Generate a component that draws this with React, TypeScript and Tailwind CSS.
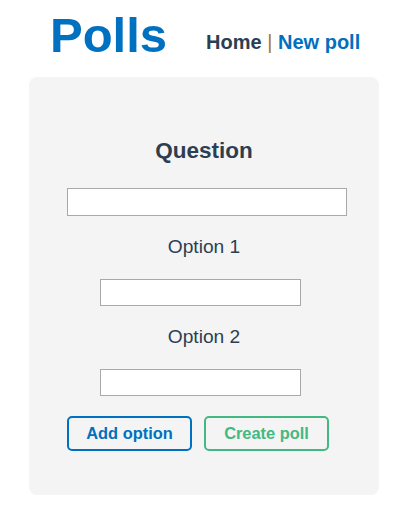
import React from 'react';

const font = { fontFamily: '"Liberation Sans", Arial, sans-serif' };

function Header() {
  return (
    <header className="flex items-start pl-[50px]">
      <h1 className="mt-[11px] text-[49px] leading-[49px] font-bold text-[#0070c0]">Polls</h1>
      <nav className="ml-[39px] mt-[32px] text-[20px] leading-[20px] font-bold">
        <a href="#" className="text-[#2c3e50]">Home</a>
        <span className="font-normal text-[#a8772f]"> | </span>
        <a href="#" className="text-[#0070c0]">New poll</a>
      </nav>
    </header>
  );
}

function OptionField({ label }: { label: string }) {
  return (
    <>
      <label className="mt-[21px] text-[19.2px] leading-[19.2px] text-[#2c3e50]">{label}</label>
      <input
        type="text"
        className="mt-[23px] mr-[7px] h-[27px] w-[201px] border border-[#a9a9a9] bg-white"
      />
    </>
  );
}

export default function App() {
  return (
    <div className="min-h-[518px] w-[413px] bg-white" style={font}>
      <Header />
      <div className="ml-[29px] mt-[17px] flex w-[350px] flex-col items-center rounded-lg bg-[#f4f4f4] pt-[63px] pb-[44px]">
        <h2 className="text-[22.5px] leading-[22.5px] font-bold text-[#2c3e50]">Question</h2>
        <input
          type="text"
          className="mt-[25px] ml-[6px] h-[28px] w-[280px] border border-[#a9a9a9] bg-white"
        />
        <OptionField label="Option 1" />
        <OptionField label="Option 2" />
        <div className="mt-[20px] mr-[12px] flex gap-[12px]">
          <button className="flex h-[35px] w-[125px] items-center justify-center rounded-[5px] border-2 border-[#0070c0] text-[16.4px] font-bold text-[#0070c0]">
            Add option
          </button>
          <button className="flex h-[35px] w-[125px] items-center justify-center rounded-[5px] border-2 border-[#42b983] text-[16.4px] font-bold text-[#42b983]">
            Create poll
          </button>
        </div>
      </div>
    </div>
  );
}
